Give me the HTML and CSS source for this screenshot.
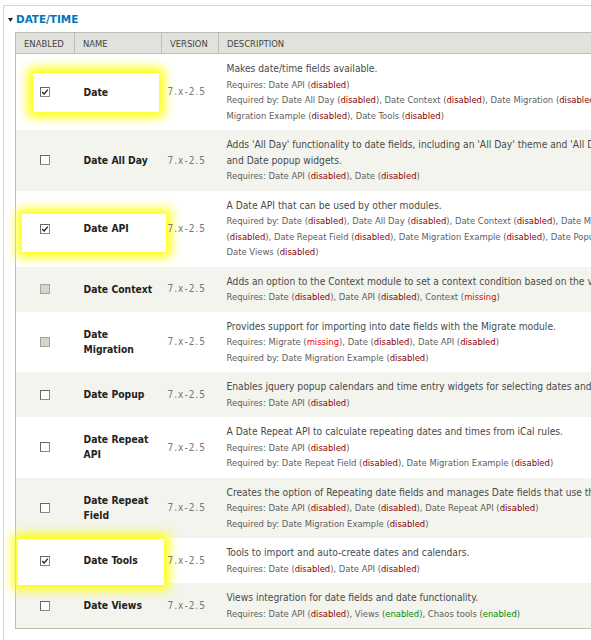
FILE: index.html
```html
<!DOCTYPE html>
<html>
<head>
<meta charset="utf-8">
<link rel="stylesheet" href="styles.css">
</head>
<body>
<div class="page">
  <div class="fieldset">
    <div class="legend"><svg class="tri" width="5" height="4" viewBox="0 0 5 4"><polygon points="0,0 5,0 2.5,4" fill="#222"/></svg><span>Date/Time</span></div>
    <table class="modules">
      <colgroup>
        <col class="c-en"><col class="c-name"><col class="c-ver"><col class="c-desc">
      </colgroup>
      <thead>
        <tr><th>Enabled</th><th>Name</th><th>Version</th><th>Description</th></tr>
      </thead>
      <tbody>
        <tr class="odd">
          <td class="en"><div class="hl hl-1"></div><span class="cb checked"><svg viewBox="0 0 8 8"><path d="M1.2 4 L3.2 6 L6.8 1.6" fill="none" stroke="#222" stroke-width="1.3"/></svg></span></td>
          <td class="name"><span>Date</span></td>
          <td class="ver"><span>7.x-2.5</span></td>
          <td class="desc"><div class="main">Makes date/time fields available.</div><div class="req">Requires: Date API (<span class="dis">disabled</span>)</div><div class="req">Required by: Date All Day (<span class="dis">disabled</span>), Date Context (<span class="dis">disabled</span>), Date Migration (<span class="dis">disabled</span>), Date Repeat Field (<span class="dis">disabled</span>), Date Migration Example (<span class="dis">disabled</span>), Date Tools (<span class="dis">disabled</span>)</div></td>
        </tr>
        <tr class="even">
          <td class="en"><span class="cb"></span></td>
          <td class="name"><span>Date All Day</span></td>
          <td class="ver"><span>7.x-2.5</span></td>
          <td class="desc"><div class="main">Adds 'All Day' functionality to date fields, including an 'All Day' theme and 'All Day' checkboxes for the Date select and Date popup widgets.</div><div class="req">Requires: Date API (<span class="dis">disabled</span>), Date (<span class="dis">disabled</span>)</div></td>
        </tr>
        <tr class="odd">
          <td class="en"><div class="hl hl-2"></div><span class="cb checked"><svg viewBox="0 0 8 8"><path d="M1.2 4 L3.2 6 L6.8 1.6" fill="none" stroke="#222" stroke-width="1.3"/></svg></span></td>
          <td class="name"><span>Date API</span></td>
          <td class="ver"><span>7.x-2.5</span></td>
          <td class="desc"><div class="main">A Date API that can be used by other modules.</div><div class="req">Required by: Date (<span class="dis">disabled</span>), Date All Day (<span class="dis">disabled</span>), Date Context (<span class="dis">disabled</span>), Date Migration (<span class="dis">disabled</span>), Date Repeat API (<span class="dis">disabled</span>), Date Repeat Field (<span class="dis">disabled</span>), Date Migration Example (<span class="dis">disabled</span>), Date Popup (<span class="dis">disabled</span>), Date Locale (<span class="dis">disabled</span>), Date Views (<span class="dis">disabled</span>)</div></td>
        </tr>
        <tr class="even">
          <td class="en"><span class="cb off"></span></td>
          <td class="name"><span>Date Context</span></td>
          <td class="ver"><span>7.x-2.5</span></td>
          <td class="desc"><div class="main">Adds an option to the Context module to set a context condition based on the value of a date field.</div><div class="req">Requires: Date (<span class="dis">disabled</span>), Date API (<span class="dis">disabled</span>), Context (<span class="mis">missing</span>)</div></td>
        </tr>
        <tr class="odd">
          <td class="en"><span class="cb off"></span></td>
          <td class="name"><span>Date Migration</span></td>
          <td class="ver"><span>7.x-2.5</span></td>
          <td class="desc"><div class="main">Provides support for importing into date fields with the Migrate module.</div><div class="req">Requires: Migrate (<span class="mis">missing</span>), Date (<span class="dis">disabled</span>), Date API (<span class="dis">disabled</span>)</div><div class="req">Required by: Date Migration Example (<span class="dis">disabled</span>)</div></td>
        </tr>
        <tr class="even">
          <td class="en"><span class="cb"></span></td>
          <td class="name"><span>Date Popup</span></td>
          <td class="ver"><span>7.x-2.5</span></td>
          <td class="desc"><div class="main">Enables jquery popup calendars and time entry widgets for selecting dates and times.</div><div class="req">Requires: Date API (<span class="dis">disabled</span>)</div></td>
        </tr>
        <tr class="odd">
          <td class="en"><span class="cb"></span></td>
          <td class="name"><span>Date Repeat API</span></td>
          <td class="ver"><span>7.x-2.5</span></td>
          <td class="desc"><div class="main">A Date Repeat API to calculate repeating dates and times from iCal rules.</div><div class="req">Requires: Date API (<span class="dis">disabled</span>)</div><div class="req">Required by: Date Repeat Field (<span class="dis">disabled</span>), Date Migration Example (<span class="dis">disabled</span>)</div></td>
        </tr>
        <tr class="even">
          <td class="en"><span class="cb"></span></td>
          <td class="name"><span>Date Repeat Field</span></td>
          <td class="ver"><span>7.x-2.5</span></td>
          <td class="desc"><div class="main">Creates the option of Repeating date fields and manages Date fields that use the Date Repeat API.</div><div class="req">Requires: Date API (<span class="dis">disabled</span>), Date (<span class="dis">disabled</span>), Date Repeat API (<span class="dis">disabled</span>)</div><div class="req">Required by: Date Migration Example (<span class="dis">disabled</span>)</div></td>
        </tr>
        <tr class="odd">
          <td class="en"><div class="hl hl-3"></div><span class="cb checked"><svg viewBox="0 0 8 8"><path d="M1.2 4 L3.2 6 L6.8 1.6" fill="none" stroke="#222" stroke-width="1.3"/></svg></span></td>
          <td class="name"><span>Date Tools</span></td>
          <td class="ver"><span>7.x-2.5</span></td>
          <td class="desc"><div class="main">Tools to import and auto-create dates and calendars.</div><div class="req">Requires: Date (<span class="dis">disabled</span>), Date API (<span class="dis">disabled</span>)</div></td>
        </tr>
        <tr class="even">
          <td class="en"><span class="cb"></span></td>
          <td class="name"><span>Date Views</span></td>
          <td class="ver"><span>7.x-2.5</span></td>
          <td class="desc"><div class="main">Views integration for date fields and date functionality.</div><div class="req">Requires: Date API (<span class="dis">disabled</span>), Views (<span class="ena">enabled</span>), Chaos tools (<span class="ena">enabled</span>)</div></td>
        </tr>
      </tbody>
    </table>
  </div>
</div>
</body>
</html>
```
FILE: styles.css
```css
html, body {
  margin: 0;
  padding: 0;
  overflow: hidden;
  background: #fff;
}
body {
  font-family: "DejaVu Sans Condensed", "DejaVu Sans", sans-serif;
  color: #333;
}
.page {
  width: 900px;
  padding: 5px 0 0 3px;
}
.fieldset {
  border-top: 1px solid #d4d4d4;
  border-left: 1px solid #d4d4d4;
  padding: 0 0 40px 11px;
}
.legend {
  height: 26px;
  line-height: 26px;
  margin-left: -7px;
  font-family: "DejaVu Sans", sans-serif;
  font-weight: bold;
  font-size: 10.4px;
  color: #0074bd;
  text-transform: uppercase;
  display: flex;
  align-items: center;
  gap: 3px;
}
.tri {
  display: block;
  margin-top: 1px;
}
.modules {
  border-collapse: collapse;
  table-layout: fixed;
  width: 750px;
  border-left: 1px solid #bebfb9;
  border-bottom: 1px solid #bebfb9;
}
.c-en { width: 59px; }
.c-name { width: 87px; }
.c-ver { width: 57px; }
.c-desc { width: 547px; }
.modules th {
  background: #e1e2dc;
  border: 1px solid #bebfb9;
  height: 20px;
  padding: 0 8px;
  text-align: left;
  font-weight: normal;
  font-size: 9.4px;
  color: #444;
  text-transform: uppercase;
}
.modules td {
  padding: 7px 8px;
  vertical-align: middle;
  line-height: 15.5px;
}
tr.odd { background: #fff; }
tr.even { background: #f3f4ee; }
td.en {
  position: relative;
  text-align: center;
  padding: 0;
}
td.name {
  padding-left: 9px;
  font-weight: bold;
  font-size: 10.3px;
  line-height: 15px;
  color: #222;
}
td.ver {
  padding-left: 6px;
  font-size: 10px;
  letter-spacing: 1px;
  color: #777;
  white-space: nowrap;
}
td.name span, td.ver span, .cb {
  position: relative;
  z-index: 1;
}
.cb {
  display: block;
  margin: 0 auto;
  width: 8px;
  height: 8px;
  border: 1px solid #8a8a8a;
  border-top-color: #666;
  border-left-color: #666;
  background: #fff;
}
.cb svg {
  display: block;
  width: 8px;
  height: 8px;
}
.cb.off {
  background: #d6d4cc;
  border-color: #a5a39c;
}
.hl {
  position: absolute;
  z-index: 0;
  background: #fff;
  box-shadow: 0 0 10px 5px #ffff00;
}
.hl-1 { left: 17px; top: 19px; width: 126px; height: 39px; }
.hl-2 { left: 6px; top: 23px; width: 144px; height: 38px; }
.hl-3 { left: 2px; top: 1px; width: 146px; height: 46px; }
.desc .main {
  font-size: 10.2px;
  color: #4a4a4a;
}
.desc .req {
  font-size: 9.4px;
  color: #5e5e5e;
}
.dis { color: #800; }
.mis { color: #e00; }
.ena { color: #080; }
```
